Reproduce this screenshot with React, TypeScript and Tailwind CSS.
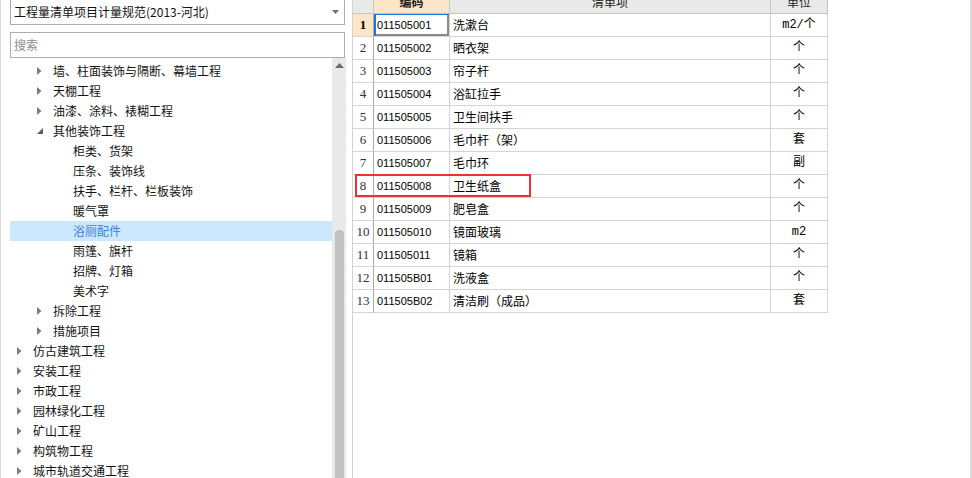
import React from "react";

type TreeItem = { label: string; level: 1 | 2 | 3; arrow?: "closed" | "open"; selected?: boolean };

const treeItems: TreeItem[] = [
  { label: "墙、柱面装饰与隔断、幕墙工程", level: 2, arrow: "closed" },
  { label: "天棚工程", level: 2, arrow: "closed" },
  { label: "油漆、涂料、裱糊工程", level: 2, arrow: "closed" },
  { label: "其他装饰工程", level: 2, arrow: "open" },
  { label: "柜类、货架", level: 3 },
  { label: "压条、装饰线", level: 3 },
  { label: "扶手、栏杆、栏板装饰", level: 3 },
  { label: "暖气罩", level: 3 },
  { label: "浴厕配件", level: 3, selected: true },
  { label: "雨篷、旗杆", level: 3 },
  { label: "招牌、灯箱", level: 3 },
  { label: "美术字", level: 3 },
  { label: "拆除工程", level: 2, arrow: "closed" },
  { label: "措施项目", level: 2, arrow: "closed" },
  { label: "仿古建筑工程", level: 1, arrow: "closed" },
  { label: "安装工程", level: 1, arrow: "closed" },
  { label: "市政工程", level: 1, arrow: "closed" },
  { label: "园林绿化工程", level: 1, arrow: "closed" },
  { label: "矿山工程", level: 1, arrow: "closed" },
  { label: "构筑物工程", level: 1, arrow: "closed" },
  { label: "城市轨道交通工程", level: 1, arrow: "closed" },
];

const rows = [
  ["011505001", "洗漱台", "m2/个"],
  ["011505002", "晒衣架", "个"],
  ["011505003", "帘子杆", "个"],
  ["011505004", "浴缸拉手", "个"],
  ["011505005", "卫生间扶手", "个"],
  ["011505006", "毛巾杆（架）", "套"],
  ["011505007", "毛巾环", "副"],
  ["011505008", "卫生纸盒", "个"],
  ["011505009", "肥皂盒", "个"],
  ["011505010", "镜面玻璃", "m2"],
  ["011505011", "镜箱", "个"],
  ["011505B01", "洗液盒", "个"],
  ["011505B02", "清洁刷（成品）", "套"],
];

const levelPad = { 1: "pl-[7px]", 2: "pl-[27px]", 3: "pl-[47px]" };

function Arrow({ kind }: { kind?: "closed" | "open" }) {
  if (kind === "closed")
    return (
      <svg width="5" height="8" viewBox="0 0 5 8">
        <polygon points="0,0 4.5,4 0,8" fill="#7c7c7c" />
      </svg>
    );
  if (kind === "open")
    return (
      <svg width="6" height="6" viewBox="0 0 6 6">
        <polygon points="6,0 6,6 0,6" fill="#595959" />
      </svg>
    );
  return null;
}

function TreePanel() {
  return (
    <div className="w-[352px] h-full border-l border-[#dadada] pl-[9px] pr-[6px] flex flex-col">
      <div className="mr-px h-[25px] border border-t-0 border-[#adadad] flex items-center justify-between pl-[3px] pr-[5px] text-[12px] text-[#111]">
        <span>工程量清单项目计量规范(2013-河北)</span>
        <svg width="7" height="4" viewBox="0 0 7 4">
          <polygon points="0,0 7,0 3.5,4" fill="#6e6e6e" />
        </svg>
      </div>
      <div className="mr-px mt-[7px] h-[26px] border border-[#adadad] flex items-center pl-[3px] text-[12px] text-[#8d8d8d]">
        搜索
      </div>
      <div className="flex flex-1 min-h-0">
        <div className="flex-1 pt-[3px] overflow-hidden">
          {treeItems.map((it) => (
            <div
              key={it.label}
              className={`h-[20px] flex items-center text-[12px] whitespace-nowrap ${levelPad[it.level]} ${
                it.selected ? "bg-[#cce8ff] text-[#3b7fd9]" : "text-[#141414]"
              }`}
            >
              <span className="w-[16px] flex items-center">
                <Arrow kind={it.arrow} />
              </span>
              {it.label}
            </div>
          ))}
        </div>
        <div className="w-[14px] bg-[#e9e9e9] flex flex-col items-center">
          <div className="pt-[5px] h-[172px]">
            <svg width="9" height="5" viewBox="0 0 9 5">
              <polygon points="0,5 4.5,0 9,5" fill="#6a6a6a" />
            </svg>
          </div>
          <div className="w-[9px] flex-1 bg-[#c1c1c1] rounded-t-[4px]" />
        </div>
      </div>
    </div>
  );
}

function DataTable() {
  return (
    <div className="flex-1 h-full border-l border-r-2 border-l-[#d2d2d2] border-r-[#dcdcdc] overflow-hidden">
      <div className="-mt-[10px]">
        <div className="flex h-[24px] text-[12px] font-bold text-[#222]">
          <div className="w-[21px] bg-[#e9e9e9] border-r border-b border-[#c4c4c4]" />
          <div className="w-[76px] bg-[#fde5c7] border-r border-b border-[#c4c4c4] flex items-center justify-center">编码</div>
          <div className="w-[321px] bg-[#e9e9e9] border-r border-b border-[#c4c4c4] flex items-center justify-center font-normal">清单项</div>
          <div className="w-[57px] bg-[#e9e9e9] border-r border-b border-[#c4c4c4] flex items-center justify-center font-normal">单位</div>
        </div>
        {rows.map(([code, name, unit], i) => (
          <div key={code} className="relative flex h-[23px] text-[12px] text-black">
            <div
              className={`w-[21px] border-r border-b border-r-[#ababab] border-b-[#d4d4d4] flex items-center justify-center text-[13px] font-['Liberation_Serif',serif] ${
                i === 0 ? "bg-[#fde5c7] font-bold" : "bg-white text-[#333]"
              }`}
            >
              {i + 1}
            </div>
            <div
              className={`w-[76px] border-r border-b border-[#d4d4d4] flex items-center pl-[3px] text-[11px] font-['Liberation_Sans',sans-serif] ${
                i === 0 ? "shadow-[inset_2px_1px_0_#1a75e6,inset_-2px_-2px_0_#8a8a8a]" : ""
              }`}
            >
              {code}
            </div>
            <div className="w-[321px] border-r border-b border-[#d4d4d4] flex items-center pl-[3px]">{name}</div>
            <div className="w-[57px] border-r border-b border-[#d4d4d4] flex items-center justify-center font-['Liberation_Mono','Noto_Sans_CJK_SC',monospace]">
              {unit}
            </div>
            {i === 7 && (
              <div className="absolute left-[2px] -top-px w-[176px] h-[23px] border-2 border-[#ea3336]" />
            )}
          </div>
        ))}
      </div>
    </div>
  );
}

export default function App() {
  return (
    <div className="w-[972px] h-[478px] bg-white flex overflow-hidden font-['Noto_Sans_CJK_SC','Noto_Sans',sans-serif]">
      <TreePanel />
      <DataTable />
    </div>
  );
}
